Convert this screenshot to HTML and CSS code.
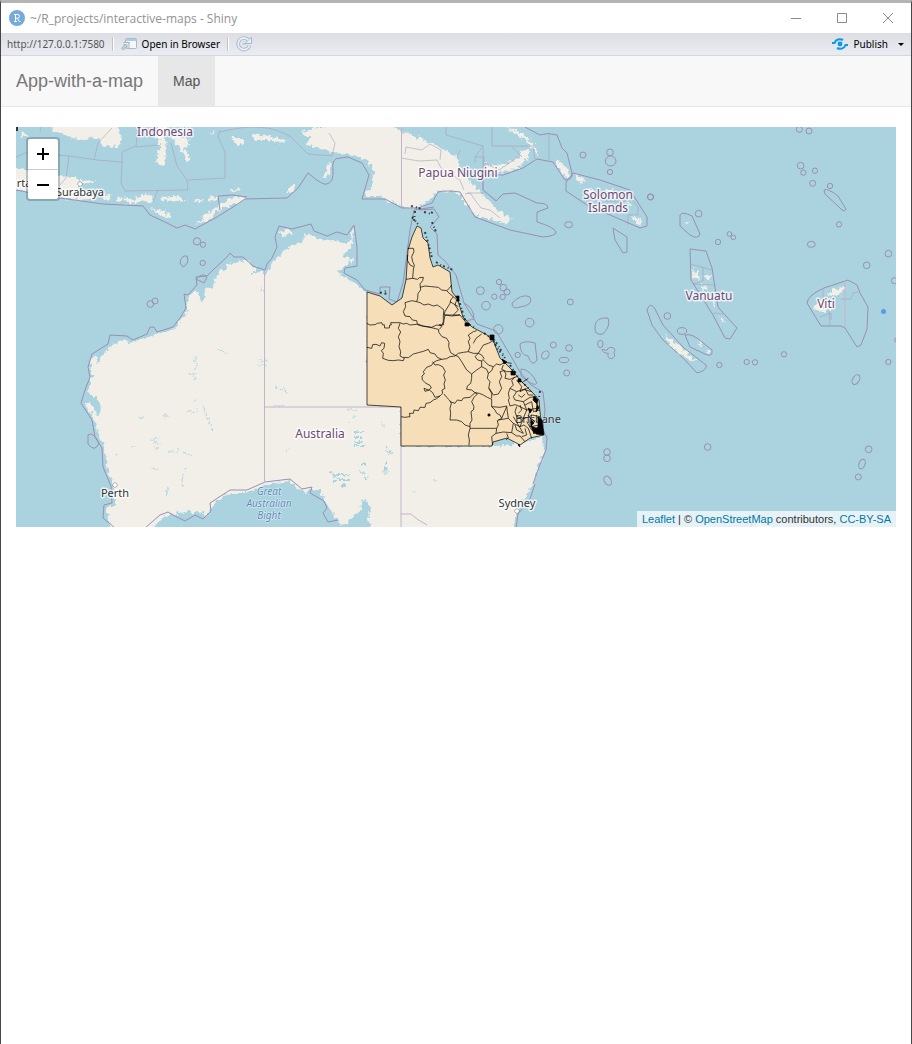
FILE: index.html
```html
<!DOCTYPE html>
<html lang="en">
<head>
<meta charset="utf-8">
<title>~/R_projects/interactive-maps - Shiny</title>
<link rel="stylesheet" href="styles.css">
</head>
<body>
<div class="window">
  <header class="titlebar">
    <svg class="app-icon" viewBox="0 0 16 16" aria-hidden="true"><circle cx="8" cy="8" r="8" fill="#75aadb"/><path d="M5 4.500H8.500Q10.500 4.500 10.500 6.400Q10.500 8 8.500 8.200H6.500M6.500 4.500V11.500M5 11.500H8M8.300 8.200L10.300 11.500H11.500" fill="none" stroke="#fff" stroke-width="1"/></svg>
    <h1 class="window-title">~/R_projects/interactive-maps - Shiny</h1>
    <div class="window-controls">
      <button class="win-btn" aria-label="Minimize"><svg viewBox="0 0 10 10"><path d="M0 5.500H10"/></svg></button>
      <button class="win-btn" aria-label="Maximize"><svg viewBox="0 0 10 10"><path d="M.5 .5H9.500V9.500H.5Z"/></svg></button>
      <button class="win-btn" aria-label="Close"><svg viewBox="0 0 10 10"><path d="M0 0L10 10M10 0L0 10"/></svg></button>
    </div>
  </header>
  <div class="toolbar">
    <span class="url">http://127.0.0.1:7580</span>
    <span class="divider"></span>
    <button class="tool open"><svg width="16" height="14" viewBox="0 0 16 14" aria-hidden="true"><rect x="4.500" y="1.500" width="11" height="10" rx="1" fill="#f4f8fc" stroke="#a9bccb"/><path d="M5 2H15V4H5Z" fill="#a9cdea"/><path d="M1 12.500L6 7.500M2.500 6.500H7V11" fill="none" stroke="#a3aeb9" stroke-width="3"/><path d="M1 12.500L6 7.500M2.500 6.500H7V11" fill="none" stroke="#f4f6f8" stroke-width="1"/></svg>Open in Browser</button>
    <span class="divider"></span>
    <button class="tool" aria-label="Reload"><svg width="16" height="16" viewBox="0 0 16 16" aria-hidden="true"><path d="M12.500 4.200A5.800 5.800 0 1 0 13.500 9.500" fill="none" stroke="#a8b6c6" stroke-width="3.600"/><path d="M15.500 1V7.500H9Z" fill="#e6effa" stroke="#a8b6c6"/><path d="M12.500 4.200A5.800 5.800 0 1 0 13.500 9.500" fill="none" stroke="#e6effa" stroke-width="1.800"/><path d="M10 8H6.500" stroke="#a8b6c6"/></svg></button>
    <button class="tool publish"><svg width="16" height="12" viewBox="0 0 16 12" aria-hidden="true"><circle cx="8" cy="6" r="2.400" fill="#0a98e8"/><path d="M0 5H2.500Q4 1.200 8 1.200Q9.500 1.200 11 2M16 7H13.500Q12 10.800 8 10.800Q6.500 10.800 5 10" fill="none" stroke="#0a98e8" stroke-width="2"/></svg>Publish<span class="caret"></span></button>
  </div>
  <nav class="navbar">
    <a class="brand" href="#">App-with-a-map</a>
    <a class="tab" href="#" aria-current="page">Map</a>
  </nav>
  <main class="content">
    <div class="map">
      <svg class="tiles" viewBox="16 127 880 400" preserveAspectRatio="xMidYMid slice" role="img" aria-label="Map of Australia and Oceania">
        <defs>
          <filter id="rough" color-interpolation-filters="sRGB" filterUnits="userSpaceOnUse" x="0" y="110" width="912" height="430"><feTurbulence type="fractalNoise" baseFrequency="0.22" numOctaves="3" seed="4" result="n"/><feDisplacementMap in="SourceGraphic" in2="n" scale="8" xChannelSelector="R" yChannelSelector="G"/></filter>
        </defs>
        <rect class="sea" x="0" y="100" width="912" height="460"/>
        <g class="land" filter="url(#rough)">
          <path d="M118 540L108 520 107 508 115 504 114 488 107 467 105 448 99 436 95 420 88 408 84 402 90 402 95 412 96 403 88 390 92 375 90 363 94 355 98 364 103 354 114 344 124 340 133 342 148 337 160 333 175 329 183 318 187 308 188 297 196 290 203 303 206 289 214 286 215 278 226 267 238 261 247 260 254 267 254 274 262 271 266 274 274 260 287 248 301 242 307 233 317 238 330 240 343 243 353 240 348 252 342 254 351 260 347 264 338 273 354 284 368 293V405H401V446H493L520 444 543 436 544 450 538 466 533 486 523 499 517 511 513 540H373L367 515 371 510 365 497 358 512 342 526 333 514 324 498 318 489 303 491 290 481 267 485 247 493 230 493 215 503 208 514 195 512 175 513 160 519 145 540Z"/>
          <path d="M328 127L345 120H385L400 131 420 138 440 147 457 157 461 172 471 183 482 194 493 204 502 213 512 219 506 224 495 220 478 217 466 204 457 192 438 191 429 200 418 208 402 207 380 196 364 196 373 182 374 171 366 161 352 155 336 153 322 149 306 145 310 138 301 133 313 128Z"/>
          <path d="M485 163L498 165 510 163 518 158 523 150 530 150 528 158 517 169 500 172 486 171ZM505 128L515 130 528 138 537 148 538 155 533 149 522 137ZM555 160L564 164 571 176 566 178 558 168ZM573 175L582 178 588 184 580 182ZM588 188L594 192 598 197 592 195ZM604 188L614 191 620 197 610 194ZM626 196L632 206 629 206ZM632 216L641 219 643 224 636 222Z"/>
          <path d="M10 169L28 170 58 175 78 178 82 192 97 198 80 200 58 197 10 188ZM50 120L53 132 70 137 84 140 99 137 103 147 110 145 118 147 122 138 117 120ZM20 132L28 134 27 138 21 137ZM157 136L160 150 155 163 165 165 166 140 166 120 158 120ZM170 136L176 134 190 140 188 148 184 147 191 160 186 161 179 148ZM80 181L95 180 94 183 82 183ZM103 193L112 195 109 202 104 200ZM117 196L123 197 121 202 116 201ZM124 197L134 200 144 194 153 198 151 202 138 203 126 204ZM160 197L174 196 188 201 178 202 161 200ZM193 201L204 198 202 202 194 203ZM207 198L221 195 218 199 208 201ZM150 208L160 210 171 215 170 218 160 215ZM195 225L203 217 211 211 220 204 236 196 246 197 243 201 221 208 213 217Z"/>
          <path d="M231 138L243 138 244 144 236 144ZM252 134L270 136 286 140 284 144 268 140 254 140ZM323 178L326 165 331 162 329 175ZM287 193L294 183 296 185 290 194ZM228 190L240 189 237 192ZM208 132L216 131 213 134ZM320 127L330 130 325 137Z"/>
          <path d="M279 231L290 230 292 234 284 236ZM350 234L354 228 353 240ZM349 260L354 257 353 265Z"/>
          <path d="M664 336L672 339 684 350 697 361 694 362 680 354 669 344ZM692 269L699 276 700 281 695 279ZM700 283L708 289 705 291ZM703 275L711 276 710 281ZM713 303L716 304 715 307ZM720 317L724 320 722 323ZM813 310L820 298 832 303 830 311ZM828 294L836 288 845 287 842 294 831 296ZM697 340L702 344 700 346ZM706 349L711 351 709 354ZM683 223L688 222 687 225ZM760 524L774 527H757Z"/>
        </g>
        <g class="lakes" filter="url(#rough)">
          <path d="M190 374H198M192 377H197M196 357V368M258 361H266M257 365H266M187 411H198M196 398V404M151 439H159M152 443H160M153 448H159M131 447H137M168 451H178M183 451L190 457M186 467L182 486M168 488L166 497M273 386L289 393M275 406H285M287 449V452M203 405L212 431M153 468L159 471M260 291H263M215 349L229 354M114 455H120M139 418H145M164 416H169M262 289V293M405 435V446"/>
          <path class="salt" d="M354 432H364M354 437H363M355 442H364M354 446H363M386 448L392 453M386 461V471M360 464H365M361 471L368 480M335 475H350M333 480H349M341 486H346M331 472L336 477"/>
          <path d="M348 422H351M384 472H390M416 491H414M433 481H436M346 410H358M352 417H356M381 422L386 428"/>
          <path d="M364 530L354 526 365 500 368 512ZM95 395L101 406 98 415 92 405Z"/>
        </g>
        <g class="maritime">
          <path d="M115 528L103 518 104 505 112 503 111 486 103 467 102 448 95 437 92 420 81 403 85 390 90 377 88 367 92 354 108 344 110 335 127 336 133 340 147 334 150 327 154 327 157 332 173 327 180 318 186 308 184 294 188 295 197 285 196 277 207 276 215 268 227 257 230 253 234 257 243 257 253 266 265 270 267 264 272 258 277 247 275 237 279 226 292 229 311 224 314 231 327 236 337 232 347 235 354 225 357 247 357 266 345 268 344 273 357 280 365 290 380 294 380 287 390 287 389 299 397 302 403 283 407 253 410 230 414 210 434 207"/>
          <path d="M145 528L160 515 168 512 175 516 185 521 195 515 203 519 211 511 210 503 230 490 247 490 265 482 290 479 302 489 312 487 310 493 324 501 327 508 323 513 328 522 338 520M533 484L539 467 546 450 547 438 543 429 545 410 543 392 531 385 520 372 512 358 496 331 477 324 464 303 456 275 445 261 438 255 437 234 430 227 439 217 434 209 419 210M516 528L518 514 530 499 535 484M464 303Q474 308 474 319L466 321"/>
          <path d="M10 189L60 198 103 204 143 206 150 215 167 223 177 228 185 225 195 229 217 217 233 207 245 199 287 198 298 188 308 173 Q323 186 327 184 334 182 333 170Q331 158 340 158L348 157 362 163 369 175 362 199 385 199 402 208 418 208 432 203 438 192 Q446 190 460 192L475 217 510 230 543 237Q556 236 556 232 554 227 537 222L537 212 548 208Q548 203 537 203L515 193 503 194 496 201 483 190V175H503L523 168 537 159 553 162 565 180Q573 180 572 173L567 153 562 148 557 135Q548 132 540 135L525 127M220 210 218 196 233 195 247 197M566 182L573 173 600 180 630 190 647 217 647 226 640 228 617 218 587 205 566 191ZM613 228L627 237V252L623 253 615 240ZM690 249L706 251 712 268 718 307 725 315 737 328 730 339 725 338 713 315 691 280ZM680 215Q682 211 692 216L700 234Q698 240 690 235L680 226ZM848 280L857 285 860 293 868 307 867 329 861 345 857 347 845 328 841 326H821L807 303Q808 295 824 288ZM647 310Q650 301 655 309L663 325 684 348 706 365Q708 370 697 373L684 359 663 340 652 325ZM685 335Q692 333 702 342L712 350Q713 358 705 354L690 347ZM824 190Q828 188 838 196L846 209Q844 213 840 208L825 194ZM595 326Q596 317 608 318Q611 326 603 334Q594 336 595 326ZM520 344Q525 340 535 343L537 360Q532 368 528 356Q520 355 520 344ZM512 303Q522 293 530 297Q534 305 520 307Q512 310 512 303ZM88 435Q93 431 99 443Q95 453 88 444ZM521 369Q530 369 537 383Q535 388 521 376ZM180 263Q181 255 187 256Q190 263 183 267ZM196 279Q203 272 207 277L204 283ZM751 527Q755 508 760 515L773 520"/>
          <path class="thin" d="M16 157L28 152M40 132L42 120M58 155L69 156 66 178 60 185M69 156L97 160 122 162M94 160L98 143 112 128M122 162V152L136 146 138 127M122 162L121 183 125 191 188 190 187 180 177 166 171 143M188 180L225 178V152L218 137 220 130M136 147L158 145M158 190L153 202M220 132Q265 120 291 137L308 154 332 156 335 143 329 133M446 127V135L483 146 475 157V163M492 120V146H533L535 159M483 146V190L496 200M512 147L522 157M549 134V160M475 157H484V175M484 193L467 193M401 158L419 161 437 160 441 168 460 180 464 190M465 194L470 193 481 208 490 210 500 218M405 154L406 147 422 150 430 144 441 150 440 160M460 150L457 158M485 163L499 170 518 157M630 198L638 207V215H628V225M606 201H626M690 264L712 270M703 267V281L693 284 714 285M713 313L724 314M823 288V308L830 307M829 310L830 326M841 299H851L853 293 858 292M820 317L831 313V320"/>
          <path class="border" d="M264.500 271V483M264.500 407H401V527M401.500 127V207M845 280V327M401 514L411 514 417 519 427 525"/>
        </g>
        <g class="maritime rings" transform="translate(640 120) scale(.33333)">
          <circle cx="31" cy="231" r="9"/><circle cx="478" cy="28" r="9"/><circle cx="507" cy="33" r="9"/><circle cx="482" cy="137" r="10"/><circle cx="490" cy="158" r="8"/><circle cx="525" cy="152" r="8"/><circle cx="518" cy="190" r="9"/><circle cx="570" cy="198" r="8"/><circle cx="597" cy="313" r="8"/><ellipse cx="514" cy="373" rx="12" ry="9"/><circle cx="745" cy="401" r="10"/><circle cx="680" cy="436" r="10"/><circle cx="763" cy="482" r="9"/><circle cx="176" cy="281" r="10"/><circle cx="234" cy="366" r="8"/><circle cx="268" cy="342" r="7"/><circle cx="280" cy="352" r="7"/><circle cx="82" cy="588" r="10"/><ellipse cx="126" cy="633" rx="14" ry="10"/><circle cx="238" cy="735" r="8"/><circle cx="320" cy="726" r="8"/><circle cx="345" cy="727" r="8"/><circle cx="432" cy="703" r="8"/><circle cx="745" cy="726" r="8"/><circle cx="771" cy="660" r="7"/>
        </g>
        <g class="maritime rings" transform="translate(540 290) scale(.33333)">
          <circle cx="91" cy="36" r="9"/><circle cx="40" cy="165" r="9"/><ellipse cx="16" cy="195" rx="10" ry="13" transform="rotate(35 16 195)"/><circle cx="87" cy="174" r="10"/><ellipse cx="72" cy="210" rx="14" ry="8"/><circle cx="80" cy="249" r="9"/><ellipse cx="181" cy="162" rx="8" ry="11"/><path d="M186 178Q188 190 205 190 200 205 214 206 228 203 222 188 230 173 212 172 204 172 201 181Z"/><circle cx="201" cy="486" r="10"/><circle cx="201" cy="505" r="10"/><ellipse cx="203" cy="572" rx="10" ry="15" transform="rotate(-30 203 572)"/><circle cx="503" cy="471" r="10"/><circle cx="986" cy="478" r="10"/><ellipse cx="966" cy="522" rx="9" ry="15" transform="rotate(20 966 522)"/><circle cx="955" cy="561" r="9"/><ellipse cx="948" cy="269" rx="10" ry="16" transform="rotate(30 948 269)"/>
        </g>
        <g class="maritime rings" transform="translate(350 200) scale(.33333)">
          <circle cx="391" cy="272" r="12"/><circle cx="408" cy="317" r="13"/><circle cx="433" cy="290" r="8"/><circle cx="447" cy="246" r="8"/><circle cx="460" cy="263" r="10"/><circle cx="471" cy="276" r="9"/><circle cx="458" cy="291" r="8"/><circle cx="539" cy="368" r="13"/><circle cx="445" cy="388" r="14"/><circle cx="503" cy="465" r="8"/><ellipse cx="656" cy="74" rx="12" ry="9"/><circle cx="699" cy="-135" r="9"/><circle cx="780" cy="-143" r="10"/><ellipse cx="782" cy="-117" rx="16" ry="15"/><circle cx="780" cy="-84" r="8"/><circle cx="902" cy="-9" r="9"/>
        </g>
        <g class="maritime rings" transform="translate(60 220) scale(.33333)">
          <circle cx="411" cy="64" r="11"/><circle cx="429" cy="74" r="8"/><circle cx="428" cy="129" r="8"/><circle cx="271" cy="252" r="10"/><circle cx="285" cy="243" r="9"/>
        </g>
        <circle cx="883.500" cy="311.500" r="2.500" fill="#5a9be4"/>
        <path d="M16 127H18V131H16" fill="#333"/>
        <path class="area" d="M367 292L380 296 392 305 402 298 406 280 408 250 412 237 417 226 421 228 423 238 428 243 430 258 433 267 438 265 450 272 452 292 457 298 463 317 472 327 487 335 493 340 500 358 512 370 520 380 532 392 539 400 540 412 543 435 530 438 520 445 507 438 493 442 492 446H401V407L367 405Z"/>
        <g class="labels">
          <circle class="city" cx="80" cy="184" r="2"/><circle class="city" cx="115" cy="485" r="2"/><circle class="city" cx="517" cy="511" r="2"/>
          <text class="country" x="165" y="136">Indonesia</text>
          <text x="80" y="196">Surabaya</text><text x="24" y="187">rta</text>
          <text class="country" x="458" y="177">Papua Niugini</text>
          <text class="country" x="608" y="199">Solomon</text><text class="country" x="608" y="212">Islands</text>
          <text class="country" x="709" y="300">Vanuatu</text><text class="country" x="826" y="308">Viti</text>
          <text class="country" x="320" y="438">Australia</text>
          <text x="115" y="497">Perth</text><text x="517" y="507">Sydney</text><text class="brisbane" x="538" y="423">Brisbane</text>
          <text class="water" x="269" y="495">Great</text><text class="water" x="269" y="507">Australian</text><text class="water" x="269" y="519">Bight</text>
        </g>
        <g class="districts">
          <g transform="translate(350 310) scale(.33333)">
            <path d="M50 40L60 45 75 44 82 40 95 38 98 45 103 44 104 54 118 54 119 45 124 45 122 38 150 38 160 42 170 40 180 45 200 43 215 48 240 52 265 58 267 68 276 80 290 85 297 97 296 110 302 128 312 134 325 140 335 155 350 180 365 192M50 112L65 115 68 104 78 103 90 108 95 98 104 100 102 115 94 122 100 130 98 145 115 151 130 152 145 150 160 152 163 145 150 138 152 125 147 110 150 95 145 80 152 66 145 55 150 40M160 142L175 143 190 132 205 128 220 124 235 118 240 128 255 132 262 142 275 148 290 146 300 140 315 138 325 130M275 148L260 152 250 158 245 166 230 172 220 185 223 192 216 198 217 210 228 220 240 226 244 234 236 240 222 235 225 244 238 240 248 248 255 262 270 258 278 250 276 240 285 235 282 222 286 210 281 195 286 185 278 170 265 164 255 165 248 155M153 320L165 322 180 320 178 310 190 310 192 300 205 302 210 292 225 292 228 280 240 278 250 270 260 266 270 258 M282 252L290 262 298 270 304 280 300 295 302 310 300 330 320 330 335 335 345 345 360 350M300 275L315 280 322 270 335 272 340 264 360 262 375 248 365 240 350 238 352 228 362 220 365 205 365 192 380 180 395 170 410 178 415 190 412 205 420 215 416 235 425 250 425 265M375 248L382 252 372 262 365 275 372 290 370 300 363 305 366 330 360 340 360 355H440L445 345 442 332 455 325 450 315 440 310 435 300 425 290V268L412 262 400 255 388 250 375 248M360 355L355 375 358 390 357 406M440 355L438 370 425 380 428 406M438 370L460 366 485 368 500 378 510 378 525 395M425 290L450 292 470 288 472 305 475 325 445 330M475 325L490 340 485 368M268 58L275 50 268 44 280 45 282 30 285 15 305 18 330 15 350 40M325 130L340 127 355 125 360 110 355 95 360 85 355 75 370 65 380 62M355 125L370 130 385 130 392 118 400 105 415 100 430 92M385 130L375 140 383 150 395 153 402 145 395 135 385 130M395 153V170M400 150L415 165 430 170 440 162 450 165 465 157 485 160M430 170L425 182 415 190M450 185L455 200 448 215 455 235 445 252 430 255 418 235M450 185L462 182 468 192 465 205 480 208 500 200M495 200L485 212 490 225 480 235 475 250 478 265 475 270 480 288M480 235L500 245 520 238 545 245M500 245L490 260 495 270 520 275 540 262 560 260M480 288L495 284 510 290 530 300 560 295M500 290L495 305 500 320 520 325 535 322 545 315 570 320M520 325L515 338 510 350 490 340M510 350L522 345 535 355 545 385M520 275L530 300 520 325M545 315L540 330 540 350 570 345M490 320L505 345 520 370 500 360 495 345M525 285L545 275 550 305 570 300M455 325L470 290M500 210L515 230 510 245 530 235M460 165L455 178 470 185 490 185M525 235L535 255 550 255M535 205L520 215M540 300L535 320 555 335M525 355L530 375 515 380M530 335L545 360 560 355M470 370L475 383 468 390 M370 100L378 85 395 72M505 310L515 300 510 285M505 255L515 262 525 252"/>
            <path d="M173-185L190-185 192-175 185-160 188-145 193-135 190-120 188-95 168-92M173-165L172-150 180-135 190-130M188-95L203-92 208-97 220-98 218-88 210-78 212-60 204-50 203-35 200-25 185-28 165-22 167-10 160 5 165 18 180 20 187 30 200 32 202 42 220 48 245 52 260 45 275 47 280 35 280 15 282 0 272-8 262-15 250-12 235-18 222-15 210-22 200-25M210-68L225-72 245-70 265-68 275-60 290-58 298-65 305-75M290-58L300-48 310-40 302-30 300-20 285 5 282 15H305L330 15M310-40L320-30 315-15 325 0 310 15M325-10L300-25"/>
          </g>
          <path class="coast" d="M367 292L380 296 392 305 402 298 406 280 408 250 412 237 417 226 421 228 423 238 428 243 430 258 433 267 438 265 450 272 452 292 457 298 463 317 472 327 487 335 493 340 500 358 512 370 520 380 532 392 539 400 540 412 543 435 530 438 520 445 507 438 493 442 492 446H401V407L367 405Z"/>
          <path class="islands" d="M411 206L422 209M412 217L418 224M415 211L414 222M424 212L431 214 434 209M425 232L430 250 432 258M436 262L441 265 453 270M380 293L386 291 385 296M456 296L460 304 466 323 474 327M484 333L493 340 497 348 505 358M491 336L498 345 503 354M510 365L520 380 530 390M540 391L539 398M432 222L436 232"/>
          <path class="dense" d="M457 296H459V301H457ZM465 323H469V326H465ZM490 335H494V340H490ZM502 359L507 362 504 364ZM511 371H515V375H511ZM518 379H521V382H518ZM534 396L538 400 537 404 533 400ZM537 404L539 408 536 412ZM538 417L542 420 544 435 536 434 533 430 538 427ZM528 408L532 410 530 413ZM531 420L534 423 531 426ZM518 445L520 447 519 444ZM488 414H490V416H488ZM531 426L536 428 534 434Z"/>
        </g>
      </svg>
      <div class="zoom-control">
        <button class="zoom-btn" aria-label="Zoom in"><svg viewBox="0 0 14 14"><path d="M1 7H13M7 1V13"/></svg></button>
        <button class="zoom-btn" aria-label="Zoom out"><svg viewBox="0 0 14 14"><path d="M1 7H13"/></svg></button>
      </div>
      <div class="attribution"><a href="#">Leaflet</a> | © <a href="#">OpenStreetMap</a> contributors, <a href="#">CC-BY-SA</a></div>
    </div>
  </main>
</div>
</body>
</html>
```
FILE: styles.css
```css
* { box-sizing: border-box; }
body { margin: 0; background: #fff; font-family: "Liberation Sans", Arial, sans-serif; }
button { border: 0; padding: 0; background: none; font: inherit; color: inherit; }
a { text-decoration: none; }
svg { display: block; }
.window { min-height: 100vh; border: 1px solid #46464a; border-top: 3px solid #b4b4b4; border-bottom: 0; background: #fff; }
.titlebar { display: flex; align-items: center; height: 30px; padding-left: 8px; font-family: "Open Sans", "Noto Sans", sans-serif; color: #929292; }
.app-icon { width: 16px; height: 16px; margin-right: 5px; }
.window-title { margin: 0; font-size: 12px; font-weight: 400; }
.window-controls { display: flex; margin-left: auto; }
.win-btn { display: flex; justify-content: center; align-items: center; width: 46px; height: 30px; }
.win-btn svg { width: 10px; height: 10px; fill: none; stroke: #8c8c8c; stroke-width: 1; overflow: visible; }
.toolbar { display: flex; align-items: center; gap: 7px; height: 23px; padding: 0 7px 0 6px; border-bottom: 1px solid #d2d8dd; background: linear-gradient(#dcdee4, #eaecf1); font-family: "Noto Sans", "Open Sans", sans-serif; font-size: 10px; color: #000; }
.url { color: #555; }
.divider { width: 2px; height: 14px; border-left: 1px solid #bfc2c8; background: #fff; }
.tool { display: flex; align-items: center; gap: 5px; }
.publish { margin-left: auto; }
.caret { margin-left: 5px; border: 3px solid transparent; border-top-color: #000; border-bottom: 0; }
.navbar { display: flex; height: 51px; border-bottom: 1px solid #e7e7e7; background: #f8f8f8; line-height: 20px; }
.brand { padding: 15px; font-size: 18px; color: #777; }
.tab { padding: 15px; font-size: 14px; color: #555; background: #e7e7e7; }
.content { padding: 20px 15px; }
.map { position: relative; height: 400px; overflow: hidden; background: #aad3df; }
.tiles { width: 100%; height: 100%; }
.sea { fill: #aad3df; }
.land { fill: #f2efe9; }
.lakes { fill: #aad3df; stroke: #aad3df; stroke-width: 1; stroke-dasharray: 5 1; }
.salt { stroke-width: 2; }
.maritime { fill: none; stroke: #998fb2; stroke-width: 1; stroke-linejoin: round; }
.rings { stroke-width: 3; }
.thin { stroke: #a99fbd; opacity: .6; }
.border { stroke: #c5b3c8; }
.labels { font-family: "Noto Sans", sans-serif; font-size: 11px; fill: #333; text-anchor: middle; paint-order: stroke; stroke: #ffffffbf; stroke-width: 3px; stroke-linejoin: round; }
.country { fill: #704a75; font-size: 12px; }
.water { fill: #5487b8; font-size: 10px; font-style: italic; stroke-width: 1px; }
.brisbane { stroke-opacity: .5; stroke-width: 1px; }
.city { fill: #fff; stroke: #666; stroke-width: 1px; }
.area { fill: #f6dfb8; }
.districts { fill: none; stroke: #000; stroke-opacity: .7; stroke-width: 3; stroke-linejoin: round; }
.coast { stroke-width: 1; }
.islands { stroke-width: 2; stroke-dasharray: 2 3 1 2; }
.dense { fill: #000; stroke-width: 1; }
.zoom-control { position: absolute; top: 10px; left: 10px; border: 2px solid rgba(0, 0, 0, .2); border-radius: 4px; background: #fff; background-clip: padding-box; }
.zoom-btn { display: flex; justify-content: center; align-items: center; width: 30px; height: 30px; }
.zoom-btn + .zoom-btn { border-top: 1px solid #ccc; }
.zoom-btn svg { width: 14px; height: 14px; stroke: #000; stroke-width: 2; }
.attribution { position: absolute; right: 0; bottom: 0; padding: 0 5px; background: rgba(255, 255, 255, .7); font-size: 11px; line-height: 16px; color: #333; }
.attribution a { color: #0078a8; }
```
